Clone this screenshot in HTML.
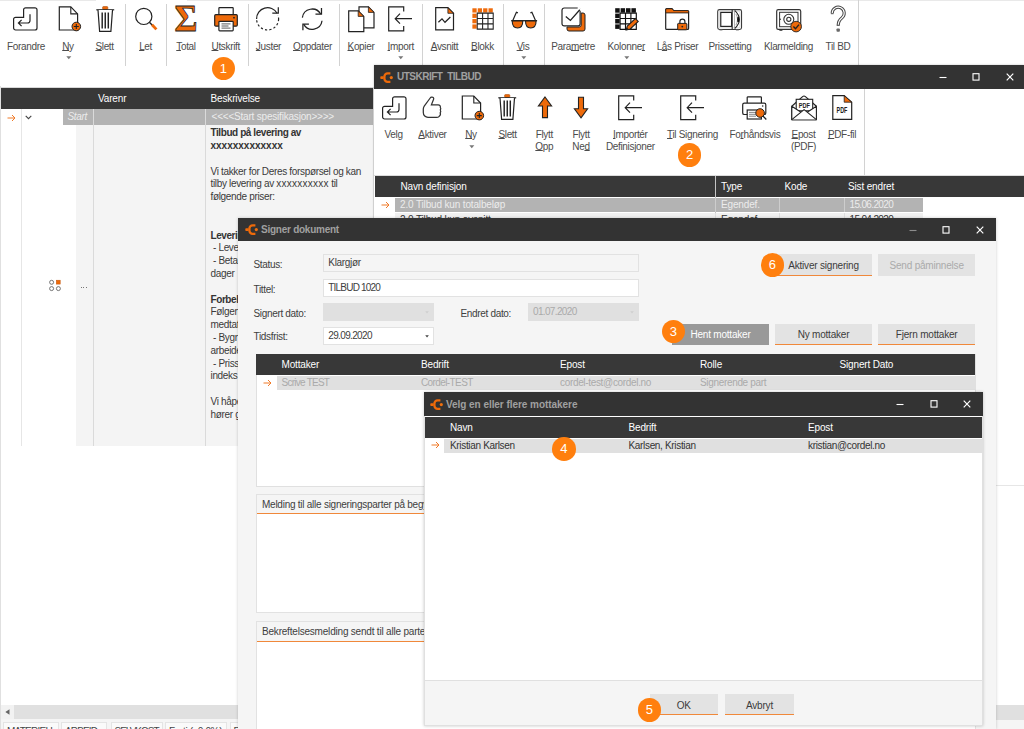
<!DOCTYPE html>
<html lang="no">
<head>
<meta charset="utf-8">
<title>Signer dokument</title>
<style>
html,body{margin:0;padding:0;}
body{width:1024px;height:729px;overflow:hidden;background:#fff;position:relative;font-family:"Liberation Sans",sans-serif;font-size:10px;letter-spacing:-0.33px;color:#404040;}
div,span{box-sizing:border-box;}
.abs{position:absolute;}
.tb{position:absolute;width:100px;text-align:center;line-height:12px;white-space:nowrap;color:#4c4c4c;}
.tb u{text-decoration:underline;text-underline-offset:0.4px;text-decoration-thickness:0.8px;}
.sep{position:absolute;width:1px;background:#d2d2d2;}
.ic{position:absolute;overflow:visible;}
.dd{position:absolute;width:0;height:0;border-left:2.8px solid transparent;border-right:2.8px solid transparent;border-top:2.8px solid #777;margin-left:-0.3px;}
.hdr{position:absolute;background:#383838;color:#fff;white-space:nowrap;letter-spacing:-0.15px;}
.hdr span{position:absolute;top:0;line-height:21px;}
.title{position:absolute;background:#333;color:#a0a0a0;font-weight:bold;white-space:nowrap;}
.badge{position:absolute;width:23.6px;height:23.6px;border-radius:50%;background:#ff7f0e;color:#fff;text-align:center;font-size:13px;line-height:23.6px;letter-spacing:0;}
.lbl{position:absolute;white-space:nowrap;line-height:14px;}
.inp{position:absolute;border:1px solid #e2e2e2;background:#fff;white-space:nowrap;line-height:15px;padding-left:4px;}
.btn{position:absolute;background:#e3e3e3;border-bottom:1px solid #f0883a;text-align:center;white-space:nowrap;color:#3c3c3c;letter-spacing:-0.2px;}
.r2{height:14px;background:#b3b3b3;color:#ececec;line-height:14px;padding-left:5px;white-space:nowrap;overflow:hidden;letter-spacing:-0.15px;}
.r2b{height:6px;background:#f0f0f0;color:#333;line-height:14px;padding-left:5px;white-space:nowrap;overflow:hidden;letter-spacing:-0.15px;}
.sb{height:12px;background:#fafafa;border:1px solid #e4e4e4;line-height:17px;padding-left:3px;white-space:nowrap;color:#444;overflow:hidden;}
</style>
</head>
<body>
<!-- ================= MAIN WINDOW ================= -->
<div id="main" class="abs" style="left:0;top:0;width:1024px;height:729px;background:#fff;">
  <div class="abs" style="left:0;top:86px;width:1px;height:643px;background:#e0e0e0;"></div>
  <!-- toolbar placeholder -->
  <div id="mtb">
<div class="abs" style="left:0;top:0;width:96px;height:1px;background:#e9e9e9;"></div><div class="abs" style="left:186.5px;top:0;width:838px;height:1px;background:#e9e9e9;"></div>
<svg class="ic" style="left:12.7px;top:6.6px;" width="25" height="24" viewBox="0 0 25 24"><path d="M12.6,0.8 H22 a2,2 0 0 1 2,2 V21 a2,2 0 0 1 -2,2 H2.6 a2,2 0 0 1 -2,-2 V12.3 a2,2 0 0 1 2,-2 H10.6 V2.8 a2,2 0 0 1 2,-2 Z" fill="#fff" stroke="#222" stroke-width="1.2"/><path d="M17,7.3 V13.5 a2.5,2.5 0 0 1 -2.5,2.5 H5.6 M8.6,12.8 L5.4,16 L8.6,19.2" fill="none" stroke="#222" stroke-width="1.2"/></svg>
<div class="tb" style="left:-24px;top:41px;">Forandre</div>
<svg class="ic" style="left:57.6px;top:5px;" width="24" height="27" viewBox="0 0 24 27"><path d="M1.3,1.9 H12.8 L19.6,8.9 V25 H1.3 Z" fill="#fff" stroke="#222" stroke-width="1.2"/><path d="M12.8,1.9 V8.9 H19.6" fill="none" stroke="#222" stroke-width="1.1"/><circle cx="18.3" cy="21.5" r="4.3" fill="#ee6a0a" stroke="#222" stroke-width="1"/><path d="M15.8,21.5 H20.8 M18.3,19 V24" stroke="#222" stroke-width="1.1"/></svg>
<div class="tb" style="left:18px;top:41px;"><u>N</u>y</div>
<svg class="ic" style="left:65.70px;top:56.10px;" width="6" height="4" viewBox="0 0 6 4"><path d="M0.3,0.3 H5.3 L2.8,3.2 Z" fill="#777"/></svg>
<svg class="ic" style="left:95.6px;top:5.6px;" width="19" height="27" viewBox="0 0 19 27"><rect x="6.6" y="0.6" width="5.2" height="2.8" rx="0.8" fill="#ee6a0a" stroke="#a84a08" stroke-width="0.6"/><path d="M0.3,3.8 H18.2" stroke="#222" stroke-width="1.2"/><path d="M2,4 L3.6,25.3 H14.9 L16.5,4" fill="#fff" stroke="#222" stroke-width="1.2"/><path d="M6.2,6.5 V22.5 M9.25,6.5 V22.5 M12.3,6.5 V22.5" stroke="#222" stroke-width="1.45"/></svg>
<div class="tb" style="left:54.599999999999994px;top:41px;"><u>S</u>lett</div>
<div class="sep" style="left:125px;top:4px;height:62px;"></div>
<svg class="ic" style="left:134px;top:6px;" width="25" height="25" viewBox="0 0 25 25"><circle cx="9.8" cy="10.4" r="8.1" fill="#fff" stroke="#222" stroke-width="1.2"/><path d="M15.4,16.2 L18.6,19.4" stroke="#222" stroke-width="1.4"/><path d="M18,18.7 L22.4,23.4" stroke="#ee6a0a" stroke-width="2.8"/></svg>
<div class="tb" style="left:95.6px;top:41px;"><u>L</u>et</div>
<div class="sep" style="left:165.5px;top:4px;height:62px;"></div>
<svg class="ic" style="left:172px;top:3px;" width="28" height="32" viewBox="0 0 28 32"><text x="14" y="28.4" text-anchor="middle" font-family="Liberation Serif, serif" font-weight="bold" font-size="37" fill="#ee6a0a" stroke="#222" stroke-width="0.8" textLength="23" lengthAdjust="spacingAndGlyphs" letter-spacing="0">Σ</text></svg>
<div class="tb" style="left:136px;top:41px;"><u>T</u>otal</div>
<svg class="ic" style="left:213.5px;top:6.5px;" width="24" height="25" viewBox="0 0 24 25"><rect x="4.9" y="0.7" width="14.3" height="8" rx="0.6" fill="#fff" stroke="#222" stroke-width="1.2"/><rect x="0.7" y="7.6" width="22.6" height="11.6" rx="1.1" fill="#ee6a0a" stroke="#222" stroke-width="1.2"/><rect x="4.9" y="14.3" width="14.3" height="9.6" rx="0.8" fill="#fff" stroke="#222" stroke-width="1.2"/><path d="M7.5,16.9 H16.5 M7.5,19 H14.5 M7.5,21.1 H16.5" stroke="#222" stroke-width="0.75"/><circle cx="20" cy="10.7" r="0.9" fill="#222"/></svg>
<div class="tb" style="left:175.75px;top:41px;"><u>U</u>tskrift</div>
<div class="sep" style="left:248px;top:4px;height:62px;"></div>
<div class="badge" style="left:211.6px;top:56.8px;">1</div>
<svg class="ic" style="left:255.4px;top:5px;" width="26" height="27" viewBox="0 0 26 27"><path d="M1.6,14 A11,11 0 0 1 22.1,8.2" fill="none" stroke="#222" stroke-width="1.2"/><path d="M23.6,14 A11,11 0 0 1 1.6,14" fill="none" stroke="#222" stroke-width="1.2" stroke-dasharray="2.2,2.2"/><path d="M23.6,14 A11,11 0 0 0 23,10.4" fill="none" stroke="#222" stroke-width="1.2" stroke-dasharray="1.5,2"/><path d="M17.3,8.2 H23.3 V2.2" fill="none" stroke="#222" stroke-width="1.2"/></svg>
<div class="tb" style="left:218.5px;top:41px;"><u>J</u>uster</div>
<svg class="ic" style="left:299.2px;top:5.9px;" width="26.4" height="26.4" viewBox="0 0 25 25"><path d="M3.2,11 A9.3,9.3 0 0 1 20.5,7.6" fill="none" stroke="#222" stroke-width="1.2"/><path d="M15.6,7.8 H21.3 V2" fill="none" stroke="#222" stroke-width="1.2"/><path d="M21.8,14 A9.3,9.3 0 0 1 4.5,17.4" fill="none" stroke="#222" stroke-width="1.2"/><path d="M9.4,17.2 H3.7 V23" fill="none" stroke="#222" stroke-width="1.2"/></svg>
<div class="tb" style="left:262.5px;top:41px;"><u>O</u>ppdater</div>
<div class="sep" style="left:338.8px;top:4px;height:62px;"></div>
<svg class="ic" style="left:347.5px;top:5.5px;" width="27" height="27" viewBox="0 0 27 27"><path d="M11,0.8 H20.4 L26,6.4 V21.8 H11 Z" fill="#fff" stroke="#222" stroke-width="1.2"/><path d="M20.4,0.8 L26,6.4 H20.4 Z" fill="#ee6a0a" stroke="#222" stroke-width="0.8"/><path d="M0.7,4.8 H10.2 L15.8,10.4 V25.7 H0.7 Z" fill="#fff" stroke="#222" stroke-width="1.2"/><path d="M10.2,4.8 L15.8,10.4 H10.2 Z" fill="#ee6a0a" stroke="#222" stroke-width="0.8"/></svg>
<div class="tb" style="left:311px;top:41px;"><u>K</u>opier</div>
<svg class="ic" style="left:388.1px;top:6.2px;" width="25" height="26" viewBox="0 0 25 26"><path d="M15.7,5.5 V0.8 H0.7 V24.8 H15.7 V20" fill="none" stroke="#222" stroke-width="1.2"/><path d="M24,12.7 H7.5 M12,7.7 L7.2,12.7 L12,17.7" fill="none" stroke="#222" stroke-width="1.2"/></svg>
<div class="tb" style="left:350.75px;top:41px;"><u>I</u>mport</div>
<svg class="ic" style="left:397.70px;top:56.10px;" width="6" height="4" viewBox="0 0 6 4"><path d="M0.3,0.3 H5.3 L2.8,3.2 Z" fill="#777"/></svg>
<div class="sep" style="left:421.5px;top:4px;height:62px;"></div>
<svg class="ic" style="left:434.8px;top:6.9px;" width="20" height="24" viewBox="0 0 20 24"><path d="M0.7,0.7 H12.9 L18.5,6.3 V22.9 H0.7 Z" fill="#fff" stroke="#222" stroke-width="1.2"/><path d="M12.9,0.7 L18.5,6.3 H12.9 Z" fill="#ee6a0a" stroke="#222" stroke-width="0.8"/><path d="M3.4,15.3 L7,11.8 L10,15.3 L15.4,10" fill="none" stroke="#222" stroke-width="1.2"/></svg>
<div class="tb" style="left:394.5px;top:41px;"><u>A</u>vsnitt</div>
<svg class="ic" style="left:472.3px;top:8.2px;" width="21.8" height="21.6" viewBox="0 0 22.3 22.3"><rect x="0.30" y="0.3" width="4.4" height="4.4" fill="#ee6a0a"/><rect x="5.85" y="0.3" width="4.4" height="4.4" fill="#ee6a0a"/><rect x="11.40" y="0.3" width="4.4" height="4.4" fill="#ee6a0a"/><rect x="16.95" y="0.3" width="4.4" height="4.4" fill="#ee6a0a"/><rect x="0.3" y="5.85" width="4.4" height="4.4" fill="#ee6a0a"/><rect x="0.3" y="11.40" width="4.4" height="4.4" fill="#ee6a0a"/><rect x="0.3" y="16.95" width="4.4" height="4.4" fill="#ee6a0a"/><path d="M5.3,5.3 H21.8 V21.8 H5.3 Z M10.85,5.3 V21.8 M16.4,5.3 V21.8 M5.3,10.85 H21.8 M5.3,16.4 H21.8" fill="#fff" stroke="#222" stroke-width="1.1"/></svg>
<div class="tb" style="left:432.5px;top:41px;"><u>B</u>lokk</div>
<div class="sep" style="left:503px;top:4px;height:62px;"></div>
<svg class="ic" style="left:509.5px;top:9.5px;" width="29" height="19" viewBox="0 0 29 19"><path d="M2.8,10.5 L6.4,2.3 L7.9,2.9 M25.5,10.5 L21.9,2.3 L20.4,2.9" fill="none" stroke="#222" stroke-width="1.2"/><path d="M2.2,10.8 H12.8 C12.8,15.4 10.8,18 7.6,18 C4.4,18 2.2,15.4 2.2,10.8 Z" fill="#ee6a0a" stroke="#222" stroke-width="1.1"/><path d="M15.5,10.8 H26.1 C26.1,15.4 23.9,18 20.7,18 C17.5,18 15.5,15.4 15.5,10.8 Z" fill="#ee6a0a" stroke="#222" stroke-width="1.1"/><path d="M1.2,10.7 H27.1" stroke="#222" stroke-width="1.3"/></svg>
<div class="tb" style="left:473px;top:41px;"><u>V</u>is</div>
<svg class="ic" style="left:521.30px;top:56.10px;" width="6" height="4" viewBox="0 0 6 4"><path d="M0.3,0.3 H5.3 L2.8,3.2 Z" fill="#777"/></svg>
<div class="sep" style="left:544px;top:4px;height:62px;"></div>
<svg class="ic" style="left:560.5px;top:7px;" width="26" height="26" viewBox="0 0 26 26"><path d="M20.2,6 H22 a2,2 0 0 1 2,2 V22 a2,2 0 0 1 -2,2 H8 a2,2 0 0 1 -2,-2 V20 H18.2 a2,2 0 0 0 2,-2 Z" fill="#ee6a0a" stroke="#222" stroke-width="1"/><rect x="1" y="1" width="18.1" height="17.9" rx="2.2" fill="#fff" stroke="#222" stroke-width="1.2"/><path d="M17,0.2 L20,3.4" stroke="#fff" stroke-width="2.2"/><path d="M4.8,9.4 L9.4,13.4 L18.8,2.8" fill="none" stroke="#222" stroke-width="1.3"/></svg>
<div class="tb" style="left:523px;top:41px;">Para<u>m</u>etre</div>
<svg class="ic" style="left:615px;top:8.4px;" width="24" height="23" viewBox="0 0 24 23"><rect x="0.20" y="0.2" width="4.5" height="4.5" fill="#111"/><rect x="5.60" y="0.2" width="4.5" height="4.5" fill="#111"/><rect x="11.00" y="0.2" width="4.5" height="4.5" fill="#111"/><rect x="16.40" y="0.2" width="4.5" height="4.5" fill="#111"/><rect x="0.2" y="5.60" width="4.5" height="4.5" fill="#111"/><rect x="0.2" y="11.00" width="4.5" height="4.5" fill="#111"/><rect x="0.2" y="16.40" width="4.5" height="4.5" fill="#111"/><path d="M5.1,5.1 H21.3 V21.3 H5.1 Z M10.5,5.1 V21.3 M15.9,5.1 V21.3 M5.1,10.5 H21.3 M5.1,15.9 H21.3" fill="#fff" stroke="#111" stroke-width="1.15"/><path d="M11.2,22 L12.3,18 L20.4,10.6 L23.2,13.4 L15.2,21 Z" fill="#ee6a0a" stroke="#222" stroke-width="1.1"/><path d="M11.2,22 L11.9,19.6 L13.7,21.3 Z" fill="#222"/></svg>
<div class="tb" style="left:576.2px;top:41px;">Kolonne<u>r</u></div>
<svg class="ic" style="left:623.70px;top:56.10px;" width="6" height="4" viewBox="0 0 6 4"><path d="M0.3,0.3 H5.3 L2.8,3.2 Z" fill="#777"/></svg>
<svg class="ic" style="left:664.6px;top:8.2px;" width="25" height="23" viewBox="0 0 25 23"><path d="M0.7,2.6 V20.4 a1,1 0 0 0 1,1 H22.6 a1,1 0 0 0 1,-1 V3.6 a1,1 0 0 0 -1,-1 H8.6 L7,0.7 H1.7 a1,1 0 0 0 -1,1 Z" fill="#fff" stroke="#222" stroke-width="1.2"/><path d="M0.7,4.9 V1.7 a1,1 0 0 1 1,-1 H7 L8.6,2.6 H22.6 a1,1 0 0 1 1,1 V4.9 Z" fill="#ee6a0a" stroke="#222" stroke-width="0.9"/><path d="M14.9,15.4 V13.6 a2.5,2.5 0 0 1 5,0 V15.4" fill="none" stroke="#222" stroke-width="1.2"/><rect x="12.7" y="15.4" width="9.2" height="6.4" rx="0.6" fill="#ee6a0a" stroke="#222" stroke-width="1"/><circle cx="17.3" cy="18.6" r="0.9" fill="#222"/></svg>
<div class="tb" style="left:627.5px;top:41px;">L<u>å</u>s Priser</div>
<svg class="ic" style="left:716.6px;top:8.7px;" width="26.1" height="22.6" viewBox="0 0 27 23" preserveAspectRatio="none"><rect x="0.7" y="0.6" width="24.7" height="20.2" rx="1.9" fill="#fff" stroke="#3a3a3a" stroke-width="1.1"/><rect x="2.3" y="2.2" width="21.5" height="17" rx="0.6" fill="none" stroke="#c4c4c4" stroke-width="0.7"/><rect x="3.9" y="3.5" width="11.2" height="14.2" fill="#fff" stroke="#222" stroke-width="1.2"/><path d="M15.7,0.8 V20.6" stroke="#222" stroke-width="1.1"/><path d="M18.1,2 V19.4" stroke="#999" stroke-width="0.8"/><path d="M18.3,1.4 Q28,10.7 18.3,20" fill="none" stroke="#222" stroke-width="1.1"/><path d="M19.6,5 Q22.8,10.7 19.6,16.4" fill="none" stroke="#777" stroke-width="0.7"/><ellipse cx="21.9" cy="10.6" rx="1.1" ry="3" fill="#111"/><path d="M2.6,21.5 H5.6 M19.6,21.5 H22.6" stroke="#888" stroke-width="0.9"/></svg>
<div class="tb" style="left:680px;top:41px;">Prissetting</div>
<svg class="ic" style="left:775.5px;top:8.9px;" width="28" height="24" viewBox="0 0 28 24"><rect x="0.7" y="0.7" width="24" height="19.6" rx="1.6" fill="#fff" stroke="#333" stroke-width="1.2"/><rect x="3.6" y="3.3" width="18.4" height="14.4" fill="none" stroke="#333" stroke-width="1"/><circle cx="12.8" cy="10.3" r="5" fill="none" stroke="#333" stroke-width="1.1"/><circle cx="12.8" cy="10.3" r="2.1" fill="none" stroke="#333" stroke-width="1.1"/><circle cx="4.2" cy="10.3" r="0.8" fill="#333"/><path d="M3.4,21.2 H6.4" stroke="#333" stroke-width="1.2"/><circle cx="20.1" cy="17.6" r="5.3" fill="#ee6a0a" stroke="#222" stroke-width="0.9"/><path d="M17.4,17.6 L19.5,19.7 L23,15.6" fill="none" stroke="#222" stroke-width="1.4"/></svg>
<div class="tb" style="left:738.5px;top:41px;">Klarmelding</div>
<svg class="ic" style="left:826px;top:2.4px;" width="26" height="32" viewBox="0 0 26 32"><path d="M6.2,11.2 a6,6 0 1 1 9.6,4.8 c-2.4,1.8 -3.6,3.4 -3.6,7.6" fill="none" stroke="#444" stroke-width="3.1"/><path d="M6.2,11.2 a6,6 0 1 1 9.6,4.8 c-2.4,1.8 -3.6,3.4 -3.6,7.6" fill="none" stroke="#fff" stroke-width="1.1" stroke-linecap="butt"/><path d="M4.9,11.7 H7.6 M10.8,23.3 H13.6" stroke="#444" stroke-width="0.9"/><rect x="10.5" y="26.4" width="3.4" height="3.3" rx="0.9" fill="#6a6a6a"/></svg>
<div class="tb" style="left:788px;top:41px;">Til BD</div>
<div class="sep" style="left:857.5px;top:0px;height:65px;"></div>
</div>
  <!-- grid -->
  <div id="mgrid">
    <div class="abs" style="left:1px;top:86.5px;width:372px;height:1px;background:#d8d8d8;"></div>
    <div class="hdr" style="left:1px;top:87.5px;width:372px;height:21px;">
      <span style="left:97px;">Varenr</span><span style="left:209.5px;">Beskrivelse</span>
    </div>
    <!-- body background -->
    <div class="abs" style="left:76px;top:109px;width:297px;height:337px;background:#f4f4f4;"></div>
    <div class="abs" style="left:20.5px;top:109px;width:1px;height:337px;background:#e6e6e6;"></div>
    <div class="abs" style="left:93px;top:109px;width:1px;height:337px;background:#dadada;"></div>
    <div class="abs" style="left:205px;top:109px;width:1px;height:337px;background:#dadada;"></div>
    <div class="abs" style="left:373px;top:87px;width:1px;height:360px;background:#e2e2e2;"></div>
    <!-- first row -->
    <div class="abs" style="left:62.5px;top:109px;width:30.5px;height:15.5px;background:#b3b3b3;color:#ececec;font-style:italic;line-height:15px;padding-left:5px;">Start</div>
    <div class="abs" style="left:94px;top:109px;width:111px;height:15.5px;background:#b3b3b3;"></div>
    <div class="abs" style="left:206px;top:109px;width:167px;height:15.5px;background:#b3b3b3;color:#ececec;line-height:15px;padding-left:5.5px;white-space:nowrap;letter-spacing:-0.2px;">&lt;&lt;&lt;&lt;Start spesifikasjon&gt;&gt;&gt;&gt;</div>
    <svg class="ic" style="left:6.5px;top:113.5px;" width="9" height="8" viewBox="0 0 9 8"><path d="M0.5,4 H8 M5,1 L8,4 L5,7" fill="none" stroke="#f07a28" stroke-width="1"/></svg>
    <svg class="ic" style="left:24.5px;top:115px;" width="7" height="5" viewBox="0 0 7 5"><path d="M0.7,0.8 L3.5,3.6 L6.3,0.8" fill="none" stroke="#444" stroke-width="1.1"/></svg>
    <!-- description text -->
    <div class="abs" style="left:210.5px;top:127.2px;width:165px;line-height:12.8px;white-space:pre;color:#3a3a3a;"><b style="letter-spacing:-0.42px;color:#333;">Tilbud på levering av
<span style="letter-spacing:0px;">xxxxxxxxxxxxx</span></b>

Vi takker for Deres forspørsel og kan
tilby levering av <span style="letter-spacing:0.25px;">xxxxxxxxxx</span> til
følgende priser:


<b style="letter-spacing:-0.42px;color:#333;">Leveringsbetingelser:</b>
 - Levering
 - Betaling netto pr. 30
dager

<b style="letter-spacing:-0.42px;color:#333;">Forbehold:</b>
Følgende forhold er ikke
medtatt i tilbudet:
 - Bygningsmessige
arbeider
 - Prisstigning etter
indeks

Vi håper tilbudet er av interesse og
hører gjerne fra Dem.</div>
    <!-- tree icon -->
    <svg class="ic" style="left:48px;top:279px;" width="14" height="13" viewBox="0 0 14 13">
      <circle cx="3.6" cy="3.3" r="2" fill="#fff" stroke="#555" stroke-width="0.8"/>
      <rect x="8.3" y="1.2" width="3.9" height="3.9" fill="#ee6a0a" stroke="#c4560a" stroke-width="0.5"/>
      <circle cx="3.6" cy="9.6" r="2" fill="#fff" stroke="#555" stroke-width="0.8"/>
      <circle cx="10.4" cy="9.6" r="2" fill="#fff" stroke="#555" stroke-width="0.8"/>
    </svg>
    <div class="abs" style="left:81px;top:286.5px;width:6px;height:1.5px;background:repeating-linear-gradient(90deg,#777 0,#777 1.2px,transparent 1.2px,transparent 2.3px);"></div>
  </div>
  <!-- bottom -->
  <div id="mbottom">
    <div class="abs" style="left:1px;top:705px;width:1023px;height:14px;background:#e0e0e0;"></div>
    <div class="abs" style="left:1px;top:705px;width:13px;height:14px;background:#f2f2f2;"></div>
    <svg class="ic" style="left:4.5px;top:708.5px;" width="5" height="6" viewBox="0 0 5 6"><path d="M4.5,0.3 V5.7 L0.3,3 Z" fill="#666"/></svg>
    <div class="abs" style="left:1px;top:719px;width:1023px;height:10px;background:#f5f5f5;"></div>
    <div class="abs sb" style="left:3px;top:721.5px;width:55.5px;letter-spacing:-0.75px;">MATERIELL</div>
    <div class="abs sb" style="left:61px;top:721.5px;width:46px;letter-spacing:-0.85px;">ARBEID</div>
    <div class="abs sb" style="left:110.5px;top:721.5px;width:52px;letter-spacing:-1px;">SELVKOST</div>
    <div class="abs sb" style="left:165px;top:721.5px;width:62px;">Fortj (&nbsp;&nbsp;0.0%)</div>
    <div class="abs sb" style="left:229.5px;top:721.5px;width:40px;">F</div>
  </div>
</div>
<!-- ================= UTSKRIFT WINDOW ================= -->
<div id="w2" class="abs" style="left:374px;top:65px;width:650px;height:664px;background:#fff;box-shadow:0 0 2px rgba(0,0,0,0.25);">
  <div class="title" style="left:0;top:0;width:650px;height:23.5px;"><span class="abs" style="left:23px;top:5.4px;line-height:14px;letter-spacing:-0.5px;word-spacing:2.5px;">UTSKRIFT TILBUD</span></div>
  <svg class="ic" style="left:6px;top:6.5px;" width="13" height="11" viewBox="0 0 13 11"><path d="M10.4,1.4 H7.6 a3.2,3.2 0 0 0 -3.2,3.2 V6.6 a3.2,3.2 0 0 0 3.2,3.2 H10.4" fill="none" stroke="#ee6a0a" stroke-width="2.3"/><rect x="0.3" y="4.2" width="3.4" height="2.8" rx="0.8" fill="#ee6a0a"/><circle cx="11.3" cy="5.6" r="1.6" fill="#f0700f"/></svg>
  <svg class="ic" style="left:563.5px;top:7.300000000000001px;" width="10" height="10" viewBox="0 0 10 10"><path d="M1.5,5.5 H8.5" stroke="#fff" stroke-width="1.1"/></svg>
  <svg class="ic" style="left:597.0px;top:7.300000000000001px;" width="10" height="10" viewBox="0 0 10 10"><rect x="2" y="1.7" width="6" height="6.4" fill="none" stroke="#fff" stroke-width="1.1"/></svg>
  <svg class="ic" style="left:630.5px;top:7.300000000000001px;" width="10" height="10" viewBox="0 0 10 10"><path d="M1.7,1.7 L8.3,8.3 M8.3,1.7 L1.7,8.3" stroke="#fff" stroke-width="1.2"/></svg>
  <div id="w2tb">
<svg class="ic" style="left:8.20px;top:30.60px;" width="25" height="24" viewBox="0 0 25 24"><path d="M12.6,0.8 H22 a2,2 0 0 1 2,2 V21 a2,2 0 0 1 -2,2 H2.6 a2,2 0 0 1 -2,-2 V12.3 a2,2 0 0 1 2,-2 H10.6 V2.8 a2,2 0 0 1 2,-2 Z" fill="#fff" stroke="#222" stroke-width="1.2"/><path d="M17,7.3 V13.5 a2.5,2.5 0 0 1 -2.5,2.5 H5.6 M8.6,12.8 L5.4,16 L8.6,19.2" fill="none" stroke="#222" stroke-width="1.2"/></svg>
<div class="tb" style="left:-30.40px;top:64.30px;">Velg</div>
<svg class="ic" style="left:48px;top:31px;" width="20" height="23" viewBox="0 0 20 23"><path d="M9.3,1.2 C10.8,0.6 12.2,1.8 11.6,3.3 L9.4,8.8 H16.2 C17.8,8.8 18.6,10 18.3,11.3 C18.9,12.3 18.9,13.3 18.3,14 C18.9,15 18.9,16 18.2,16.8 C18.7,18 18.3,19.6 17,20.6 C16.3,21.2 15.5,21.3 14.5,21.3 H6 C3.5,21.3 1.3,19.5 1.3,16.5 V13 C1.3,11.5 1.8,10.8 2.6,9.6 L8.2,2 C8.5,1.6 8.9,1.3 9.3,1.2 Z" fill="#fff" stroke="#333" stroke-width="1.25"/></svg>
<div class="tb" style="left:8.50px;top:64.30px;"><u>A</u>ktiver</div>
<svg class="ic" style="left:86.50px;top:29.50px;" width="24" height="27" viewBox="0 0 24 27"><path d="M1.3,1 H12.8 L19.6,8 V24 H1.3 Z" fill="#fff" stroke="#222" stroke-width="1.2"/><path d="M12.8,1 V8 H19.6" fill="none" stroke="#222" stroke-width="1.1"/><circle cx="18.3" cy="20.6" r="4.3" fill="#ee6a0a" stroke="#222" stroke-width="1"/><path d="M15.8,20.6 H20.8 M18.3,18.1 V23.1" stroke="#222" stroke-width="1.1"/></svg>
<div class="tb" style="left:47.00px;top:64.30px;"><u>N</u>y</div>
<svg class="ic" style="left:94.50px;top:79.60px;" width="6" height="4" viewBox="0 0 6 4"><path d="M0.3,0.3 H5.3 L2.8,3.2 Z" fill="#777"/></svg>
<svg class="ic" style="left:124.40px;top:29.20px;" width="19" height="27" viewBox="0 0 19 27"><rect x="6.6" y="0.6" width="5.2" height="2.8" rx="0.8" fill="#ee6a0a" stroke="#a84a08" stroke-width="0.6"/><path d="M0.3,3.8 H18.2" stroke="#222" stroke-width="1.2"/><path d="M2,4 L3.6,25.3 H14.9 L16.5,4" fill="#fff" stroke="#222" stroke-width="1.2"/><path d="M6.2,6.5 V22.5 M9.25,6.5 V22.5 M12.3,6.5 V22.5" stroke="#222" stroke-width="1.45"/></svg>
<div class="tb" style="left:83.60px;top:64.30px;"><u>S</u>lett</div>
<svg class="ic" style="left:162.5px;top:31px;" width="16" height="23" viewBox="0 0 16 23"><path d="M8,1 L14.6,10 H10.5 V21.6 H5.5 V10 H1.4 Z" fill="#ee6a0a" stroke="#222" stroke-width="1.1" stroke-linejoin="miter"/></svg>
<div class="tb" style="left:120.30px;top:64.30px;">Flytt<br><u>O</u>pp</div>
<svg class="ic" style="left:199px;top:31px;" width="16" height="23" viewBox="0 0 16 23"><path d="M8,21.8 L14.6,12.8 H10.5 V1.2 H5.5 V12.8 H1.4 Z" fill="#ee6a0a" stroke="#222" stroke-width="1.1" stroke-linejoin="miter"/></svg>
<div class="tb" style="left:157.00px;top:64.30px;">Flytt<br>Ne<u>d</u></div>
<svg class="ic" style="left:244.20px;top:30.30px;" width="25" height="26" viewBox="0 0 25 26"><path d="M15.7,5.5 V0.8 H0.7 V24.6 H15.7 V19.8" fill="none" stroke="#222" stroke-width="1.2"/><path d="M24,12.7 H7.5 M12,7.7 L7.2,12.7 L12,17.7" fill="none" stroke="#222" stroke-width="1.2"/></svg>
<div class="tb" style="left:206.30px;top:64.30px;"><u>I</u>mportér<br>Definisjoner</div>
<svg class="ic" style="left:306.40px;top:30.30px;" width="25" height="26" viewBox="0 0 25 26"><path d="M15.7,5.5 V0.8 H0.7 V24.6 H15.7 V19.8" fill="none" stroke="#222" stroke-width="1.2"/><path d="M24,12.7 H7.5 M12,7.7 L7.2,12.7 L12,17.7" fill="none" stroke="#222" stroke-width="1.2"/></svg>
<div class="tb" style="left:268.50px;top:64.30px;"><u>T</u>il Signering</div>
<div class="badge" style="left:303.90px;top:78px;">2</div>
<svg class="ic" style="left:368px;top:30.5px;" width="26" height="25" viewBox="0 0 26 25"><rect x="5.2" y="0.8" width="14.2" height="7" rx="0.8" fill="#fff" stroke="#222" stroke-width="1.2"/><rect x="0.7" y="7.1" width="23.1" height="11.4" rx="1.6" fill="#fff" stroke="#222" stroke-width="1.2"/><rect x="5.2" y="14" width="14.2" height="9" fill="#fff" stroke="#222" stroke-width="1.2"/><path d="M7,16.4 H14 M7,18.3 H14 M7,20.2 H14" stroke="#777" stroke-width="0.9"/><circle cx="20.7" cy="10" r="0.8" fill="#222"/><path d="M20.5,19.5 L24.3,23.5" stroke="#222" stroke-width="1.2"/><circle cx="18.1" cy="17" r="4.3" fill="#ee6a0a" stroke="#222" stroke-width="1"/></svg>
<div class="tb" style="left:330.90px;top:64.30px;">Fo<u>r</u>håndsvis</div>
<svg class="ic" style="left:416.5px;top:29.5px;" width="27" height="26" viewBox="0 0 27 26"><path d="M0.8,11.3 L11.6,1.6 Q13,0.4 14.4,1.6 L25.4,11.3 V24.6 H0.8 Z" fill="#fff" stroke="#222" stroke-width="1.2" stroke-linejoin="round"/><rect x="5.2" y="4.3" width="16.5" height="11.5" fill="#fff" stroke="#222" stroke-width="1.1"/><text x="13.4" y="12.8" text-anchor="middle" font-family="Liberation Sans Narrow, Liberation Sans, sans-serif" font-weight="bold" font-size="8" fill="#222" textLength="11.3" lengthAdjust="spacingAndGlyphs" letter-spacing="0">PDF</text><path d="M0.8,11.3 L13.1,19.2 L25.4,11.3 V24.6 H0.8 Z" fill="#fff" stroke="#222" stroke-width="1.1" stroke-linejoin="round"/><path d="M0.8,24.6 L13.1,14.6 L25.4,24.6" fill="#fff" stroke="#222" stroke-width="1.1" stroke-linejoin="round"/></svg>
<div class="tb" style="left:379.50px;top:64.30px;"><u>E</u>post<br>(PDF)</div>
<svg class="ic" style="left:457.80px;top:30px;" width="21" height="26" viewBox="0 0 21 26"><path d="M0.8,0.7 H12.2 L19.7,7.2 V24.4 H0.8 Z" fill="#fff" stroke="#222" stroke-width="1.2"/><path d="M12.2,0.7 L19.7,7.2 H12.2 Z" fill="#ee6a0a" stroke="#222" stroke-width="0.8"/><text x="10" y="18" text-anchor="middle" font-family="Liberation Sans Narrow, Liberation Sans, sans-serif" font-weight="bold" font-size="9" fill="#222" textLength="10.8" lengthAdjust="spacingAndGlyphs" letter-spacing="0">PDF</text></svg>
<div class="tb" style="left:418.00px;top:64.30px;"><u>P</u>DF-fil</div>
</div>
  <div class="sep" style="left:489.5px;top:24px;height:86px;"></div>
  <div class="abs" style="left:0;top:109.5px;width:650px;height:1px;background:#dcdcdc;"></div>
  <div class="hdr" style="left:1px;top:111.2px;width:649px;height:21px;">
    <span style="left:25.5px;">Navn definisjon</span><span style="left:346px;">Type</span><span style="left:409.5px;">Kode</span><span style="left:473px;">Sist endret</span>
  </div>
  <div class="abs" style="left:340.5px;top:111px;width:1.5px;height:42px;background:#c4c4c4;"></div>
  <!-- row 1 -->
  <div class="abs" style="left:21px;top:133px;width:527.5px;height:14px;background:#cdcdcd;"></div>
  <div class="abs" style="left:21px;top:147.5px;width:527.5px;height:6px;background:#dedede;"></div>
  <svg class="ic" style="left:7px;top:135.5px;" width="9" height="8" viewBox="0 0 9 8"><path d="M0.5,4 H8 M5,1 L8,4 L5,7" fill="none" stroke="#f07a28" stroke-width="1"/></svg>
  <div class="abs r2" style="left:21px;top:133px;width:319.5px;">2.0 Tilbud kun totalbeløp</div>
  <div class="abs r2" style="left:342px;top:133px;width:63px;">Egendef.</div>
  <div class="abs r2" style="left:406px;top:133px;width:63.5px;"></div>
  <div class="abs r2" style="left:470.5px;top:133px;width:78px;letter-spacing:-0.65px;">15.06.2020</div>
  <!-- row 2 -->
  <div class="abs r2b" style="left:21px;top:147.5px;width:319.5px;">2.0 Tilbud kun avsnitt</div>
  <div class="abs r2b" style="left:342px;top:147.5px;width:63px;">Egendef.</div>
  <div class="abs r2b" style="left:406px;top:147.5px;width:63.5px;"></div>
  <div class="abs r2b" style="left:470.5px;top:147.5px;width:78px;letter-spacing:-0.65px;">15.04.2020</div>
  <!-- right remnants -->
  <div class="abs" style="left:622px;top:419.5px;width:28px;height:1px;background:#e6e6e6;"></div>
  <div class="abs" style="left:622px;top:640px;width:28px;height:15px;background:#e0e0e0;"></div>
  <div class="abs" style="left:622px;top:655px;width:28px;height:9px;background:#f5f5f5;"></div>
</div>
<!-- ================= SIGNER WINDOW ================= -->
<div id="w3" class="abs" style="left:238px;top:218px;width:758px;height:511px;background:#f5f5f5;box-shadow:0 0 3px rgba(0,0,0,0.2);">
  <div class="title" style="left:0;top:0;width:758px;height:23px;"><span class="abs" style="left:23px;top:5px;line-height:14px;letter-spacing:-0.25px;">Signer dokument</span></div>
  <svg class="ic" style="left:7px;top:6px;" width="13" height="11" viewBox="0 0 13 11"><path d="M10.4,1.4 H7.6 a3.2,3.2 0 0 0 -3.2,3.2 V6.6 a3.2,3.2 0 0 0 3.2,3.2 H10.4" fill="none" stroke="#ee6a0a" stroke-width="2.3"/><rect x="0.3" y="4.2" width="3.4" height="2.8" rx="0.8" fill="#ee6a0a"/><circle cx="11.3" cy="5.6" r="1.6" fill="#f0700f"/></svg>
  <svg class="ic" style="left:669.8px;top:6.6px;" width="10" height="10" viewBox="0 0 10 10"><path d="M1.5,5.5 H8.5" stroke="#8c8c8c" stroke-width="1.1"/></svg>
  <svg class="ic" style="left:703.3px;top:6.6px;" width="10" height="10" viewBox="0 0 10 10"><rect x="2" y="1.7" width="6" height="6.4" fill="none" stroke="#fff" stroke-width="1.1"/></svg>
  <svg class="ic" style="left:736.8px;top:6.6px;" width="10" height="10" viewBox="0 0 10 10"><path d="M1.7,1.7 L8.3,8.3 M8.3,1.7 L1.7,8.3" stroke="#fff" stroke-width="1.2"/></svg>
  <div class="lbl" style="left:15.5px;top:39.5px;">Status:</div>
  <div class="lbl" style="left:15.5px;top:64.8px;">Tittel:</div>
  <div class="lbl" style="left:15.5px;top:88.5px;">Signert dato:</div>
  <div class="lbl" style="left:15.5px;top:112.2px;">Tidsfrist:</div>
  <div class="lbl" style="left:222.5px;top:88.5px;">Endret dato:</div>
  <div class="inp" style="left:85.3px;top:36.4px;width:316px;height:17.2px;background:#f5f5f5;">Klargjør</div>
  <div class="inp" style="left:85.3px;top:61.4px;width:316px;height:17.3px;letter-spacing:-0.8px;">TILBUD 1020</div>
  <div class="inp" style="left:85.3px;top:85px;width:111.2px;height:17.5px;background:#e0e0e0;border-color:#e0e0e0;"></div>
  <svg class="ic" style="left:187.40px;top:92.90px;" width="4.4" height="3" viewBox="0 0 6 4"><path d="M0.3,0.3 H5.3 L2.8,3.2 Z" fill="#cfcfcf"/></svg>
  <div class="inp" style="left:290px;top:85px;width:111.3px;height:17.5px;background:#e0e0e0;border-color:#e0e0e0;color:#aaa;letter-spacing:-0.65px;">01.07.2020</div>
  <svg class="ic" style="left:392.40px;top:92.90px;" width="4.4" height="3" viewBox="0 0 6 4"><path d="M0.3,0.3 H5.3 L2.8,3.2 Z" fill="#cfcfcf"/></svg>
  <div class="inp" style="left:85.3px;top:109.2px;width:111.2px;height:17.4px;letter-spacing:-0.65px;">29.09.2020</div>
  <svg class="ic" style="left:187.40px;top:117.00px;" width="4.4" height="3" viewBox="0 0 6 4"><path d="M0.3,0.3 H5.3 L2.8,3.2 Z" fill="#444"/></svg>
  <!-- buttons -->
  <div class="btn" style="left:537px;top:36.3px;width:97px;height:21.5px;line-height:23px;">Aktiver signering</div>
  <div class="btn" style="left:640.3px;top:36.3px;width:96.7px;height:21.5px;line-height:23px;border-bottom-color:#e3e3e3;color:#aaa;">Send påminnelse</div>
  <div class="btn" style="left:434px;top:106px;width:97px;height:20.5px;line-height:22px;background:#999;border-bottom-color:#999;color:#fff;">Hent mottaker</div>
  <div class="btn" style="left:537px;top:105.8px;width:97px;height:21px;line-height:22.5px;">Ny mottaker</div>
  <div class="btn" style="left:640.3px;top:105.8px;width:96.7px;height:21px;line-height:22.5px;">Fjern mottaker</div>
  <div class="badge" style="left:522.5px;top:35.3px;">6</div>
  <div class="badge" style="left:423.6px;top:101.8px;">3</div>
  <!-- grid -->
  <div class="abs" style="left:17.5px;top:136px;width:720px;height:132.5px;background:#fff;border:1px solid #e0e0e0;"></div>
  <div class="hdr" style="left:18px;top:136px;width:719px;height:21.2px;">
    <span style="left:25.5px;">Mottaker</span><span style="left:165px;">Bedrift</span><span style="left:304px;">Epost</span><span style="left:444px;">Rolle</span><span style="left:583.5px;">Signert Dato</span>
  </div>
  <svg class="ic" style="left:24.5px;top:160.7px;" width="9" height="8" viewBox="0 0 9 8"><path d="M0.5,4 H8 M5,1 L8,4 L5,7" fill="none" stroke="#f07a28" stroke-width="1"/></svg>
  <div class="abs" style="left:38.5px;top:158px;width:698.5px;height:13.6px;background:#e0e0e0;color:#aaa;line-height:13.6px;white-space:nowrap;">
    <span class="abs" style="left:5px;letter-spacing:-0.75px;">Scrive TEST</span><span class="abs" style="left:144.5px;letter-spacing:-0.6px;">Cordel-TEST</span><span class="abs" style="left:283.5px;">cordel-test@cordel.no</span><span class="abs" style="left:423.5px;">Signerende part</span>
  </div>
  <!-- message boxes -->
  <div class="abs" style="left:17.5px;top:276px;width:720px;height:118.5px;background:#fff;border:1px solid #e2e2e2;">
    <div class="abs" style="left:0;top:0;width:718px;height:19px;background:#f5f5f5;border-bottom:1px solid #f0883a;line-height:19px;padding-left:5.5px;white-space:nowrap;letter-spacing:-0.25px;">Melding til alle signeringsparter på begynnelsen</div>
  </div>
  <div class="abs" style="left:17.5px;top:403px;width:720px;height:118.5px;background:#fff;border:1px solid #e2e2e2;">
    <div class="abs" style="left:0;top:0;width:718px;height:20px;background:#f5f5f5;border-bottom:1px solid #f0883a;line-height:20px;padding-left:5.5px;white-space:nowrap;letter-spacing:-0.2px;">Bekreftelsesmelding sendt til alle parter</div>
  </div>
</div>
<!-- ================= VELG WINDOW ================= -->
<div id="w4" class="abs" style="left:423.5px;top:392.4px;width:559px;height:333.6px;background:#fff;box-shadow:0 0 3px rgba(0,0,0,0.22);">
  <div class="title" style="left:0;top:0;width:559px;height:23.6px;"><span class="abs" style="left:22.5px;top:5.3px;line-height:14px;letter-spacing:-0.05px;">Velg en eller flere mottakere</span></div>
  <svg class="ic" style="left:6.5px;top:6.5px;" width="13" height="11" viewBox="0 0 13 11"><path d="M10.4,1.4 H7.6 a3.2,3.2 0 0 0 -3.2,3.2 V6.6 a3.2,3.2 0 0 0 3.2,3.2 H10.4" fill="none" stroke="#ee6a0a" stroke-width="2.3"/><rect x="0.3" y="4.2" width="3.4" height="2.8" rx="0.8" fill="#ee6a0a"/><circle cx="11.3" cy="5.6" r="1.6" fill="#f0700f"/></svg>
  <svg class="ic" style="left:471.9px;top:7px;" width="10" height="10" viewBox="0 0 10 10"><path d="M1.5,5.5 H8.5" stroke="#fff" stroke-width="1.1"/></svg>
  <svg class="ic" style="left:505.4px;top:7px;" width="10" height="10" viewBox="0 0 10 10"><rect x="2" y="1.7" width="6" height="6.4" fill="none" stroke="#fff" stroke-width="1.1"/></svg>
  <svg class="ic" style="left:538.9px;top:7px;" width="10" height="10" viewBox="0 0 10 10"><path d="M1.7,1.7 L8.3,8.3 M8.3,1.7 L1.7,8.3" stroke="#fff" stroke-width="1.2"/></svg>
  <div class="hdr" style="left:0.5px;top:24.8px;width:558.5px;height:21.2px;">
    <span style="left:26px;">Navn</span><span style="left:204.5px;">Bedrift</span><span style="left:384px;">Epost</span>
  </div>
  <svg class="ic" style="left:7.5px;top:49px;" width="9" height="8" viewBox="0 0 9 8"><path d="M0.5,4 H8 M5,1 L8,4 L5,7" fill="none" stroke="#f07a28" stroke-width="1"/></svg>
  <div class="abs" style="left:20.5px;top:46.9px;width:538.5px;height:13.6px;background:#e0e0e0;color:#333;line-height:13.8px;white-space:nowrap;">
    <span class="abs" style="left:6px;">Kristian Karlsen</span><span class="abs" style="left:184.5px;">Karlsen, Kristian</span><span class="abs" style="left:364px;">kristian@cordel.no</span>
  </div>
  <div class="abs" style="left:0;top:23.6px;width:1px;height:310px;background:#e0e0e0;"></div>
  <div class="abs" style="left:558px;top:23.6px;width:1px;height:310px;background:#e0e0e0;"></div>
  <div class="abs" style="left:0;top:287.6px;width:559px;height:46px;background:#f5f5f5;border:1px solid #e0e0e0;"></div>
  <div class="btn" style="left:226px;top:301.6px;width:68.5px;height:21.5px;line-height:23px;">OK</div>
  <div class="btn" style="left:301.5px;top:301.6px;width:69px;height:21.5px;line-height:23px;">Avbryt</div>
  <div class="badge" style="left:128.7px;top:44.6px;">4</div>
  <div class="badge" style="left:214px;top:305.6px;">5</div>
</div>
</body>
</html>
